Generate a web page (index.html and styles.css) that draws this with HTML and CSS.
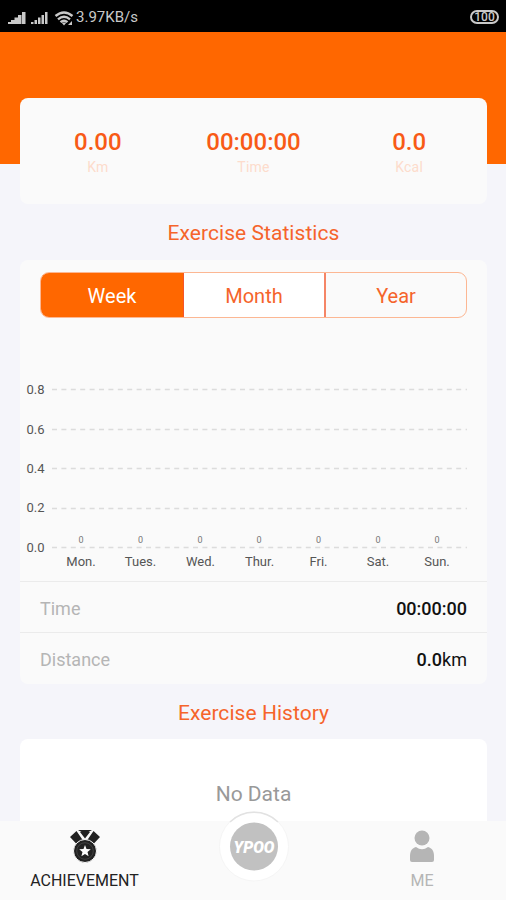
FILE: index.html
```
<!DOCTYPE html>
<html lang="en">
<head>
    <meta charset="UTF-8">
    <meta name="viewport" content="width=device-width, initial-scale=1.0">
    <title>Achievement</title>
    <link rel="stylesheet" href="styles.css">
</head>
<body>
    <header class="status">
        <svg class="signals" width="68" height="20" viewBox="0 0 68 20" fill="#c9c9c9">
            <path d="M0 16v-2h3v2zM3 16v-4h3.500v4zM6.500 16V9.500H10V16zM10 16V7h3.500v9zM14 16V4h3.500v12z"/>
            <path d="M23 16v-2h2.500v2zM26.500 16v-4h2.500v4zM30 16V9.500h2.500V16zM33.500 16V7h2.500v9zM37 16V4h2.500v12z"/>
            <g fill="none" stroke="#c9c9c9" stroke-width="2.400">
                <path d="M47.500 8q8.500-7 17 0M50 11.300q6-5 12 0M52.500 14.200q3.500-3 7 0"/>
            </g>
            <path d="M53.500 14.500h5L56 17.500zM60 17l4-4v4z"/>
        </svg>
        <span class="speed">3.97KB/s</span>
        <span class="battery">100</span>
    </header>

    <main>
        <div class="hero"></div>
        <section class="card totals">
            <div><strong>0.00</strong><span>Km</span></div>
            <div><strong>00:00:00</strong><span>Time</span></div>
            <div><strong>0.0</strong><span>Kcal</span></div>
        </section>

        <h2>Exercise Statistics</h2>
        <section class="card stats">
            <div class="tabs">
                <button class="tab active">Week</button>
                <button class="tab middle">Month</button>
                <button class="tab">Year</button>
            </div>
            <svg class="chart" width="467" height="263" viewBox="20 318 467 263">
                <g class="grid">
                    <path d="M52 389.500H467M52 429.500H467M52 468.500H467M52 508.500H467M52 547.500H467"/>
                </g>
                <g class="axis">
                    <text x="26.500" y="394">0.8</text>
                    <text x="26.500" y="434">0.6</text>
                    <text x="26.500" y="473">0.4</text>
                    <text x="26.500" y="512">0.2</text>
                    <text x="26.500" y="552">0.0</text>
                </g>
                <g class="values">
                    <text x="81" y="543">0</text>
                    <text x="140.500" y="543">0</text>
                    <text x="200" y="543">0</text>
                    <text x="259" y="543">0</text>
                    <text x="318.500" y="543">0</text>
                    <text x="378" y="543">0</text>
                    <text x="437" y="543">0</text>
                </g>
                <g class="days">
                    <text x="81" y="566">Mon.</text>
                    <text x="140.500" y="566">Tues.</text>
                    <text x="200.500" y="566">Wed.</text>
                    <text x="259.500" y="566">Thur.</text>
                    <text x="318.500" y="566">Fri.</text>
                    <text x="378" y="566">Sat.</text>
                    <text x="437" y="566">Sun.</text>
                </g>
            </svg>
            <div class="row"><span>Time</span><b>00:00:00</b></div>
            <div class="row"><span>Distance</span><b>0.0<i>km</i></b></div>
        </section>

        <h2 class="history-title">Exercise History</h2>
        <section class="card history">No Data</section>
    </main>

    <nav>
        <a class="item active">
            <svg width="32" height="34" viewBox="0 0 32 34">
                <path fill="#222" d="M9 1h14l-3.500 2h-7zM7.500 2L1 8l7 7.500 6-4zM24.500 2L31 8l-7 7.500-6-4zM11 3h10l-5 6.500z"/>
                <circle cx="16" cy="22" r="11.500" fill="#222" stroke="#fafafa"/>
                <circle cx="16" cy="22" r="8.300" fill="none" stroke="#555" stroke-width=".6"/>
                <path fill="#fff" d="M16 16l1.500 4 4.300.3-3.300 2.700 1.100 4.200-3.600-2.300-3.600 2.300 1.100-4.200-3.300-2.700 4.300-.3z"/>
            </svg>
            <span>ACHIEVEMENT</span>
        </a>
        <a class="start">
            <svg width="72" height="74" viewBox="0 0 72 74">
                <circle cx="36" cy="37.500" r="34.500" fill="#fff" stroke="#f5f5f5"/>
                <path d="M12 13a34.500 34.500 0 0 1 48 0" fill="none" stroke="#e2e2e2" stroke-width="1.500"/>
                <circle cx="36" cy="37.500" r="24" fill="#c1c1c1"/>
                <text class="logo" x="15.500" y="43.500" textLength="41" lengthAdjust="spacingAndGlyphs">YPOO</text>
            </svg>
        </a>
        <a class="item">
            <svg width="32" height="34" viewBox="0 0 32 34" fill="#b5b5b5">
                <circle cx="16" cy="9" r="7.500"/>
                <path d="M4 31v-4c0-5 2-8 6-9q6 4.500 12 0c4 1 6 4 6 9v4q0 2-2 2H6q-2 0-2-2z"/>
            </svg>
            <span>ME</span>
        </a>
    </nav>
</body>
</html>
```

FILE: styles.css
```
* {
    box-sizing: border-box;
}
body {
    margin: 0;
    height: 900px;
    overflow: hidden;
    display: flex;
    flex-direction: column;
    font-family: Roboto, sans-serif;
    background-color: #f5f5fa;
}
.status {
    flex: none;
    height: 32px;
    padding: 1px 7px 0 8px;
    display: flex;
    align-items: center;
    background-color: #000;
    color: #c9c9c9;
}
.signals {
    margin-top: 2px;
}
.speed {
    font-size: 15px;
}
.battery {
    margin-left: auto;
    width: 29px;
    height: 14px;
    border: 2px solid #c9c9c9;
    border-radius: 7px;
    font-size: 12px;
    font-weight: 500;
    line-height: 11px;
    text-align: center;
}
main {
    flex: 1;
    min-height: 0;
    overflow: hidden;
}
.hero {
    height: 132px;
    background-color: #ff6700;
}
.card {
    margin: 0 19px 0 20px;
    border-radius: 8px;
    background-color: #fafafa;
}
.totals {
    position: relative;
    height: 106px;
    margin-top: -66px;
    padding: 30px 0 0;
    display: grid;
    grid-template-columns: repeat(3, 1fr);
    text-align: center;
}
.totals strong {
    display: block;
    font-size: 24px;
    font-weight: 500;
    line-height: 28px;
    color: #f85a16;
}
.totals span {
    display: block;
    font-size: 14px;
    line-height: 22px;
    letter-spacing: 0.2px;
    color: #fddccc;
}
h2 {
    margin: 0;
    height: 56px;
    padding-left: 1px;
    font-size: 21px;
    font-weight: normal;
    line-height: 58px;
    letter-spacing: 0.05px;
    text-align: center;
    color: #f5642b;
}
.stats {
    height: 424px;
    padding-top: 12px;
}
.tabs {
    height: 46px;
    margin: 0 20px;
    display: grid;
    grid-template-columns: 142px 143px 1fr;
    border: 1.5px solid #fcb793;
    border-radius: 9px;
    overflow: hidden;
}
.tab {
    padding: 1px 0 0;
    border: 0;
    background: none;
    font-family: inherit;
    font-size: 20px;
    color: #f5642b;
}
.tab.active {
    background-color: #ff6700;
    color: #fff;
}
.tab.middle {
    background-color: #fff;
    border-left: 1px solid #f5562a;
    border-right: 2px solid #f58566;
}
.chart {
    display: block;
}
.grid {
    stroke: #dcdcdc;
    stroke-width: 1.3;
    stroke-dasharray: 5 4.4;
}
.axis, .days {
    font-size: 13px;
    fill: #555;
}
.values {
    font-size: 9px;
    fill: #777;
}
.values, .days {
    text-anchor: middle;
}
.row {
    height: 51px;
    padding: 2px 20px 0;
    display: flex;
    align-items: center;
    justify-content: space-between;
    border-top: 1px solid #ebebeb;
    font-size: 18px;
    color: #b5b5b5;
}
.row b {
    font-weight: 500;
    color: #111;
}
.row i {
    font-style: normal;
    font-weight: normal;
}
.history-title {
    height: 55px;
}
.history {
    height: 110px;
    background-color: #fff;
    font-size: 21px;
    line-height: 110px;
    text-align: center;
    color: #999;
}
nav {
    flex: none;
    height: 79px;
    display: grid;
    grid-template-columns: 169px 1fr 168px;
    background-color: #fafafa;
}
.item {
    padding-top: 8px;
    display: flex;
    flex-direction: column;
    align-items: center;
    font-size: 16px;
    line-height: 24px;
    color: #b5b5b5;
}
.item span {
    margin-top: 6px;
}
.item.active {
    color: #222;
}
.start {
    margin-top: -12px;
    display: flex;
    justify-content: center;
    align-items: flex-start;
}
.logo {
    font-size: 17px;
    font-weight: 900;
    font-style: italic;
    fill: #fff;
}
```
